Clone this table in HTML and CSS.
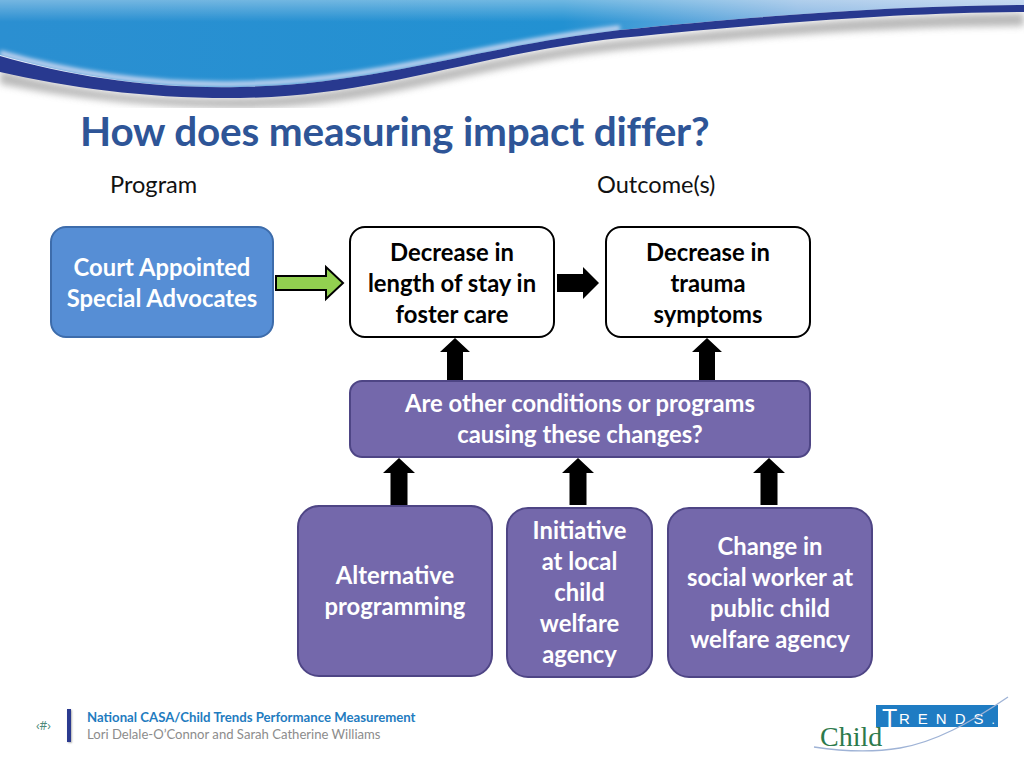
FILE: index.html
```
<!DOCTYPE html>
<html lang="en">
<head>
<meta charset="utf-8">
<title>How does measuring impact differ?</title>
<link rel="stylesheet" href="styles.css">
</head>
<body>
<div class="slide">
  <svg class="swoosh" viewBox="0 0 1024 108" width="1024" height="108" aria-hidden="true">
    <defs>
      <linearGradient id="sky" x1="0" y1="0" x2="1" y2="0">
        <stop offset="0" stop-color="#2b8fd1"/>
        <stop offset="0.55" stop-color="#2291d2"/>
        <stop offset="0.78" stop-color="#86b5e2"/>
        <stop offset="1" stop-color="#aac6ea"/>
      </linearGradient>
      <linearGradient id="skytop" x1="0" y1="0" x2="0" y2="1">
        <stop offset="0" stop-color="#ffffff" stop-opacity="0.35"/>
        <stop offset="0.25" stop-color="#ffffff" stop-opacity="0"/>
      </linearGradient>
      <filter id="blur6" x="-5%" y="-50%" width="110%" height="200%"><feGaussianBlur stdDeviation="3.5"/></filter>
      <filter id="blur2" x="-5%" y="-50%" width="110%" height="200%"><feGaussianBlur stdDeviation="2"/></filter>
    </defs>
    <path d="M0,70 C70,90 150,100 240,98 C380,95 470,56 620,40 C780,24 900,14 1024,13 L1024,26 C900,27 780,34 620,50 C470,66 380,108 240,108 C150,108 70,98 0,84 Z" fill="#a2a2a2" filter="url(#blur6)" opacity="0.75"/>
    <path d="M0,0 H1024 V5 C900,6 780,14 620,30 C470,48 380,84 240,87 C150,89 70,75 0,55 Z" fill="url(#sky)"/>
    <path d="M0,0 H1024 V5 C900,6 780,14 620,30 C470,48 380,84 240,87 C150,89 70,75 0,55 Z" fill="url(#skytop)"/>
    <path d="M0,53 C70,73 150,86 240,84 C380,81 470,46 620,28" fill="none" stroke="#cdd8f2" stroke-width="5" filter="url(#blur2)"/>
    <path d="M0,56 C70,76 150,89 240,87 C380,84 470,48 620,30 C780,14 900,6 1024,5 L1024,12 C900,13 780,22 620,38 C470,55 380,96 240,98 C150,99 70,88 0,72 Z" fill="#28398f"/>
  </svg>

  <h1 class="title">How does measuring impact differ?</h1>

  <div class="labels">
    <span class="label label-program">Program</span>
    <span class="label label-outcome">Outcome(s)</span>
  </div>

  <div class="diagram">
    <div class="node node-casa">Court Appointed<br>Special Advocates</div>

    <svg class="arrow arrow-green" viewBox="0 0 72 38" width="72" height="38" aria-hidden="true">
      <polygon points="2,12 52,12 52,3 69,19 52,35 52,26 2,26" fill="#92d050" stroke="#000" stroke-width="2" stroke-linejoin="miter"/>
    </svg>

    <div class="node node-out node-stay">Decrease in<br>length of stay in<br>foster care</div>

    <svg class="arrow arrow-black" viewBox="0 0 46 34" width="46" height="34" aria-hidden="true">
      <polygon points="2,8 28,8 28,1 44,17 28,33 28,26 2,26" fill="#000"/>
    </svg>

    <div class="node node-out node-trauma">Decrease in<br>trauma<br>symptoms</div>

    <svg class="arrow arrow-up arrow-up-1" viewBox="0 0 32 42" width="32" height="42" aria-hidden="true">
      <polygon points="16,0 31,14 24,14 24,42 8,42 8,14 1,14" fill="#000"/>
    </svg>
    <svg class="arrow arrow-up arrow-up-2" viewBox="0 0 32 42" width="32" height="42" aria-hidden="true">
      <polygon points="16,0 31,14 24,14 24,42 8,42 8,14 1,14" fill="#000"/>
    </svg>

    <div class="node node-purple node-question">Are other conditions or programs<br>causing these changes?</div>

    <svg class="arrow arrow-low arrow-low-1" viewBox="0 0 34 47" width="34" height="47" aria-hidden="true">
      <polygon points="17,0 33,15 25.5,15 25.5,47 8.5,47 8.5,15 1,15" fill="#000"/>
    </svg>
    <svg class="arrow arrow-low arrow-low-2" viewBox="0 0 34 47" width="34" height="47" aria-hidden="true">
      <polygon points="17,0 33,15 25.5,15 25.5,47 8.5,47 8.5,15 1,15" fill="#000"/>
    </svg>
    <svg class="arrow arrow-low arrow-low-3" viewBox="0 0 34 47" width="34" height="47" aria-hidden="true">
      <polygon points="17,0 33,15 25.5,15 25.5,47 8.5,47 8.5,15 1,15" fill="#000"/>
    </svg>

    <div class="node node-purple node-cause node-alt">Alternative<br>programming</div>
    <div class="node node-purple node-cause node-init">Initiative<br>at local<br>child<br>welfare<br>agency</div>
    <div class="node node-purple node-cause node-worker">Change in<br>social worker at<br>public child<br>welfare agency</div>
  </div>

  <footer class="footer">
    <span class="page-num">‹#›</span>
    <span class="footer-bar"></span>
    <div class="footer-text">
      <div class="footer-title">National CASA/Child Trends Performance Measurement</div>
      <div class="footer-authors">Lori Delale-O’Connor and Sarah Catherine Williams</div>
    </div>
    <svg class="logo" viewBox="0 0 200 60" width="200" height="60" aria-label="Child Trends">
      <rect x="66" y="10" width="122" height="22" fill="#1f7cc3"/>
      <text x="72" y="32" class="logo-t">T</text>
      <text x="89" y="29" class="logo-rends">RENDS<tspan class="logo-reg">.</tspan></text>
      <text x="10" y="51" class="logo-child">Child</text>
      <path d="M4,52 C30,56 60,58 90,53 C125,47 160,28 198,2" fill="none" stroke="#9fb3d6" stroke-width="1.3"/>
    </svg>
  </footer>
</div>
</body>
</html>
```

FILE: styles.css
```
* {
  box-sizing: border-box;
  margin: 0;
  padding: 0;
}

body {
  margin: 0;
  background: #ffffff;
  font-family: Lato, "Open Sans", "Liberation Sans", sans-serif;
}

.slide {
  width: 1024px;
  height: 768px;
  overflow: hidden;
  background: #ffffff;
  display: flex;
  flex-direction: column;
}

.swoosh {
  display: block;
  flex: 0 0 auto;
}

.title {
  margin-left: 80px;
  margin-top: -2px;
  font-size: 40.5px;
  line-height: 50px;
  font-weight: 700;
  color: #2e5597;
  letter-spacing: -0.2px;
  flex: 0 0 auto;
}

.labels {
  display: grid;
  grid-template-columns: 487px auto;
  padding-left: 110px;
  margin-top: 13px;
  height: 31px;
  font-size: 23.6px;
  line-height: 31px;
  color: #111111;
  flex: 0 0 auto;
}

.diagram {
  position: relative;
  width: 1024px;
  height: 480px;
  flex: 0 0 auto;
}

.node {
  position: absolute;
  display: flex;
  align-items: center;
  justify-content: center;
  text-align: center;
  font-weight: 700;
  font-size: 23.8px;
  line-height: 31px;
  white-space: nowrap;
}

.node-casa {
  left: 50px;
  top: 26px;
  width: 224px;
  height: 112px;
  background: #568ed5;
  border: 2px solid #3d6cab;
  border-radius: 16px;
  color: #ffffff;
  padding-top: 2px;
}

.node-out {
  top: 26px;
  width: 206px;
  height: 112px;
  background: #ffffff;
  border: 2.5px solid #000000;
  border-radius: 16px;
  color: #000000;
  padding-top: 2px;
}

.node-stay { left: 349px; }
.node-trauma { left: 605px; }

.node-purple {
  background: #7468ab;
  border: 2px solid #4e4585;
  color: #ffffff;
}

.node-question {
  left: 349px;
  top: 180px;
  width: 462px;
  height: 78px;
  border-radius: 13px;
}

.node-cause {
  border-radius: 22px;
  height: 171px;
}

.node-alt {
  left: 297px;
  top: 305px;
  width: 196px;
  height: 172px;
}

.node-init {
  left: 506px;
  top: 307px;
  width: 147px;
}

.node-worker {
  left: 667px;
  top: 307px;
  width: 206px;
}

.arrow {
  position: absolute;
  display: block;
}

.arrow-green { left: 274px; top: 64px; }
.arrow-black { left: 555px; top: 66px; }

.arrow-up { top: 138px; }
.arrow-up-1 { left: 439px; }
.arrow-up-2 { left: 691px; }

.arrow-low { top: 258px; }
.arrow-low-1 { left: 382px; }
.arrow-low-2 { left: 561px; }
.arrow-low-3 { left: 752px; }

.footer {
  display: flex;
  align-items: center;
  height: 88px;
  padding-left: 36px;
  flex: 0 0 auto;
}

.page-num {
  font-family: "Open Sans", Lato, sans-serif;
  font-size: 12px;
  color: #4e8a7a;
  width: 31px;
  margin-top: 2px;
}

.footer-bar {
  width: 4px;
  height: 33px;
  background: #2b3a8f;
  box-shadow: 1px 1px 2px rgba(0, 0, 0, 0.3);
  margin-right: 16px;
  margin-top: 2px;
}

.footer-text {
  width: 723px;
  margin-top: 2px;
}

.footer-title {
  font-size: 13.2px;
  line-height: 18px;
  font-weight: 700;
  color: #1f7cc0;
}

.footer-authors {
  font-size: 13.1px;
  line-height: 17px;
  color: #8c8c8c;
}

.logo {
  display: block;
  margin-top: 2px;
}

.logo-t {
  font-family: "Liberation Sans", sans-serif;
  font-size: 25px;
  fill: #ffffff;
}

.logo-rends {
  font-family: "Liberation Sans", sans-serif;
  font-size: 15px;
  letter-spacing: 8px;
  fill: #ffffff;
}

.logo-reg {
  font-size: 12px;
  letter-spacing: 0;
}

.logo-child {
  font-family: "Liberation Serif", serif;
  font-size: 28px;
  fill: #2d7a4c;
}
```
